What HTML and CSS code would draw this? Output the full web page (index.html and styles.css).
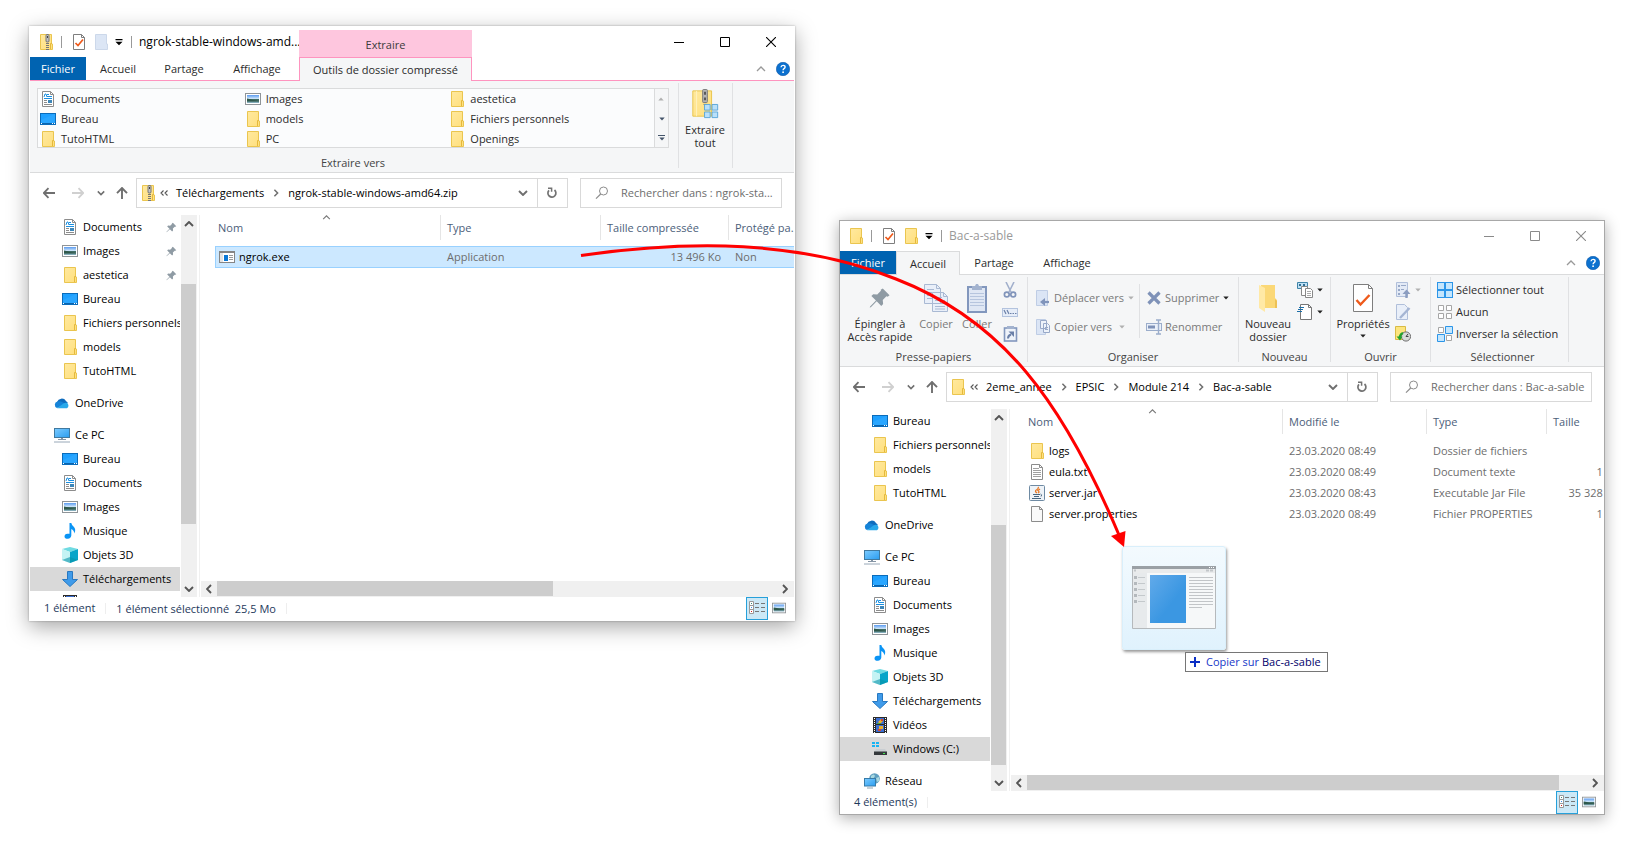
FILE: index.html
```html
<!DOCTYPE html>
<html lang="fr">
<head>
<meta charset="utf-8">
<title>Explorateur de fichiers</title>
<link rel="stylesheet" href="styles.css">
</head>
<body>
<svg class="sprite" aria-hidden="true">
  <defs>
    <linearGradient id="g-folder" x1="0" y1="0" x2="1" y2="1"><stop offset="0" stop-color="#ffe99f"/><stop offset="1" stop-color="#ffdf7c"/></linearGradient>
    <linearGradient id="g-screen" x1="0" y1="0" x2="1" y2="1"><stop offset="0" stop-color="#7ccbff"/><stop offset="1" stop-color="#2a9df0"/></linearGradient>
    <linearGradient id="g-photo" x1="0" y1="0" x2="0" y2="1"><stop offset="0" stop-color="#5b9bf0"/><stop offset=".5" stop-color="#d8ecfb"/><stop offset=".55" stop-color="#3f6b62"/><stop offset="1" stop-color="#8fb7c9"/></linearGradient>
    <linearGradient id="g-blue" x1="0" y1="0" x2="1" y2="1"><stop offset="0" stop-color="#61aaea"/><stop offset=".6" stop-color="#3b97e2"/></linearGradient>
  </defs>
  <symbol id="folder" viewBox="0 0 16 16"><path d="M2.500.5h11v9.500h1v5.500h-12z" fill="url(#g-folder)" stroke="#eac54f"/><path d="M12.500 15v-5.500h1.500" fill="none" stroke="#e5b93c"/></symbol>
  <symbol id="zip" viewBox="0 0 16 16"><path d="M2.500.5h11v9.500h1v5.500h-12z" fill="url(#g-folder)" stroke="#eac54f"/><path d="M12.500 15v-5.500h1.500" fill="none" stroke="#e5b93c"/><path d="M9.500 7v9" stroke="#777" stroke-width="3" stroke-dasharray="1 1"/><rect x="8" y=".5" width="3" height="7.500" rx="1" fill="#c4c4c4" stroke="#777"/><path d="M9.500 2v2" stroke="#444"/></symbol>
  <symbol id="folder-faded" viewBox="0 0 16 16"><path d="M2.500.5h11v9.500h1v5.500h-12z" fill="#dce6f5" stroke="#ccd8ea"/></symbol>
  <symbol id="doc" viewBox="0 0 16 16"><path d="M2.500.5h8l3 3v12h-11z" fill="#fff" stroke="#8c8c8c"/><path d="M10.500.5v3h3" fill="none" stroke="#8c8c8c"/><path d="M4 6l1-3h1l1 3M7 3.500h2M7 5.500h5M4 7.500h8" fill="none" stroke="#1b8fe0"/><path d="M4 9.500h3M4 11.500h3M4 13.500h8" stroke="#8c8c8c"/><rect x="8" y="9" width="4" height="3" fill="#3d86b8"/></symbol>
  <symbol id="image" viewBox="0 0 16 16"><rect x=".5" y="2.500" width="15" height="11" fill="#fff" stroke="#8f9498"/><rect x="2" y="4" width="12" height="8" fill="url(#g-photo)"/><path d="M2 7.500q4 .5 6 1.500l6 .5v1H2z" fill="#2f584b"/></symbol>
  <symbol id="desktop" viewBox="0 0 16 16"><rect x=".5" y="2.500" width="15" height="11" fill="#1ea0ff" stroke="#0a6cbb"/><path d="M1 12V9l13-6h1v9z" fill="#35acff" opacity=".5"/><path d="M1 12.500h14" stroke="#0a64ad"/><path d="M1 12.500h1M12 12.500h1M14 12.500h1" stroke="#fff"/></symbol>
  <symbol id="pin" viewBox="0 0 12 12"><path d="M7.500.8l3.700 3.700-1 .8-.7-.2-2 2 .2 2.200-1 1L4.200 7.800 1 11l-.6.2.2-.6 3.200-3.200L1.300 4.900l1-1 2.200.2 2-2-.1-.6z" fill="#8f9ba4"/></symbol>
  <symbol id="cloud" viewBox="0 0 16 16"><path d="M3 7a5 5 0 0 1 9-1l2 2-8 4z" fill="#0f6cbd"/><path d="M3.500 6.500A3.400 3.400 0 0 0 3 13l9-4-5-2.500a6 6 0 0 0-3.500 0z" fill="#1583d8"/><path d="M3 13.200l6.500-4.700a4 4 0 0 1 3-.7 3 3 0 0 1 .5 5.400z" fill="#28a8ea"/></symbol>
  <symbol id="pc" viewBox="0 0 16 16"><rect x=".5" y="1.500" width="15" height="9" fill="url(#g-screen)" stroke="#40799f"/><path d="M4 12.500h8" stroke="#8595a5"/><path d="M7 11h2v1H7z" fill="#8595a5"/><path d="M0 15h16" stroke="#98a8b8"/></symbol>
  <symbol id="music" viewBox="0 0 16 16"><path d="M7.500 0h1.800q.4 2 2.200 3.600 3 3 .8 7-.2-3.600-3-4.600v6.500q-.3 3-3.500 3.300-3.300 0-3.300-2.300 0-2.500 3-2.800h2z" fill="#0a94f5"/></symbol>
  <symbol id="cube" viewBox="0 0 16 16"><path d="M0 2l8-2 8 2-8 3z" fill="#6fdbe2"/><path d="M0 2l8 3v11l-8-3z" fill="#c4f3f4"/><path d="M16 2L8 5v11l8-3z" fill="#08a5c9"/><path d="M0 13l8-3 8 3-8 3z" fill="#0693a8" opacity=".6"/></symbol>
  <symbol id="download" viewBox="0 0 16 16"><path d="M5.500.5h5v8h5L8 15.500.5 8.500h5z" fill="#3f9bea" stroke="#2878c0"/></symbol>
  <symbol id="video" viewBox="0 0 16 16"><path d="M1 0h14v16H1z" fill="#2b2b2b"/><path d="M2.500 1v15M13.500 1v15" stroke="#fff" stroke-dasharray="1 1"/><path d="M4 1h8v6H4zM4 8h8v7H4z" fill="#3c6ed0"/><path d="M6 5l3-3 2 2-3 3zM7 9h4v3H7z" fill="#e8b030"/><path d="M9 2h2v2H9zM6 12h3v2H6z" fill="#d9482b"/><path d="M5 6h4v1H5z" fill="#48a848"/></symbol>
  <symbol id="drive" viewBox="0 0 16 16"><path d="M0 1h3v2H0zM4 1h3v2H4zM0 4h3v2H0zM4 4h3v2H4z" fill="#17b4f4"/><path d="M4 8h9l2 3H2z" fill="#c9ced2"/><path d="M2 10.500h13v3.500H2z" fill="#34383b"/><path d="M11 12h2v1h-2z" fill="#43e650"/></symbol>
  <symbol id="network" viewBox="0 0 16 16"><circle cx="10.500" cy="5.500" r="5.300" fill="#5f9fc0"/><path d="M7 3q3-3 4 0l-2 3-2 0zM12 5l3-1v4l-2 1z" fill="#a9d8df"/><rect x=".5" y="5.500" width="11" height="7.500" fill="url(#g-screen)" stroke="#377ba8"/><path d="M3 15h6" stroke="#8fa3b0"/></symbol>
  <symbol id="exe" viewBox="0 0 16 16"><rect x=".5" y="2.500" width="15" height="11" fill="#fff" stroke="#858585"/><path d="M0 3h16" stroke="#858585" stroke-width="2"/><path d="M1 4h3v9H1z" fill="#e3e3e3"/><path d="M5 6h4v6H5z" fill="#0a78d6"/><path d="M10 6.500h4M10 8.500h4M10 10.500h4" stroke="#999"/></symbol>
  <symbol id="txt" viewBox="0 0 16 16"><path d="M2.500.5h8l3 3v12h-11z" fill="#fff" stroke="#8c8c8c"/><path d="M10.500.5v3h3" fill="none" stroke="#8c8c8c"/><path d="M4 4.500h6M4 6.500h8M4 8.500h8M4 10.500h8M4 12.500h8" stroke="#a0a0a0"/></symbol>
  <symbol id="blank" viewBox="0 0 16 16"><path d="M2.500.5h8l3 3v12h-11z" fill="#f9f9f9" stroke="#8c8c8c"/><path d="M10.500.5v3h3" fill="none" stroke="#8c8c8c"/></symbol>
  <symbol id="jar" viewBox="0 0 16 16"><rect x=".5" y=".5" width="15" height="15" rx="1" fill="#eef3f8" stroke="#6e8aa3"/><path d="M8 8q-3-2 0-3.500Q10 3 9 2M9 8q2-1 0-2.500L11 4" fill="none" stroke="#e87722" stroke-width="1.300"/><path d="M4 9.500h7M5 11.500h5M3 13.500h9M11.500 9q2 .5.500 2.500" fill="none" stroke="#47657f"/></symbol>
  <symbol id="check-doc" viewBox="0 0 16 16"><path d="M2.500.5h8l3 3v12h-11z" fill="#fff" stroke="#7e7e7e"/><path d="M10.500.5v3h3" fill="none" stroke="#7e7e7e"/><path d="M4.500 9l2.500 2.500 5-6" fill="none" stroke="#ee5a1b" stroke-width="1.700"/></symbol>
  <symbol id="qat-more" viewBox="0 0 8 8"><path d="M.5 1h7v1.300h-7zM.5 3.800h7L4 7.300z" fill="#000"/></symbol>
  <symbol id="tri" viewBox="0 0 6 4"><path d="M.3.500h5.400L3 3.500z" fill="currentColor"/></symbol>
  <symbol id="min" viewBox="0 0 10 10"><path d="M0 5.500h10" stroke="currentColor"/></symbol>
  <symbol id="max" viewBox="0 0 10 10"><path d="M.5.5h9v9h-9z" fill="none" stroke="currentColor"/></symbol>
  <symbol id="close" viewBox="0 0 10 10"><path d="M0 0l10 10M10 0L0 10" stroke="currentColor" stroke-width="1.100"/></symbol>
  <symbol id="help" viewBox="0 0 14 14"><circle cx="7" cy="7" r="6.700" fill="#0c71cf" stroke="#0b58a8" stroke-width=".6"/><path d="M5 5.300q.2-1.900 2.100-1.900 2 0 2 1.700 0 .9-1.100 1.600-.9.600-.9 1.500" fill="none" stroke="#fff" stroke-width="1.400"/><circle cx="7.100" cy="10.200" r=".9" fill="#fff"/></symbol>
  <symbol id="up-thin" viewBox="0 0 10 6"><path d="M1 5l4-4 4 4" fill="none" stroke="currentColor" stroke-width="1.300"/></symbol>
  <symbol id="down-bold" viewBox="0 0 10 6"><path d="M1 1l4 4 4-4" fill="none" stroke="currentColor" stroke-width="1.900"/></symbol>
  <symbol id="up-bold" viewBox="0 0 10 6"><path d="M1 5l4-4 4 4" fill="none" stroke="currentColor" stroke-width="1.900"/></symbol>
  <symbol id="left-bold" viewBox="0 0 6 10"><path d="M5 1L1 5l4 4" fill="none" stroke="currentColor" stroke-width="1.900"/></symbol>
  <symbol id="right-bold" viewBox="0 0 6 10"><path d="M1 1l4 4-4 4" fill="none" stroke="currentColor" stroke-width="1.900"/></symbol>
  <symbol id="arrow-left" viewBox="0 0 12 12"><path d="M12 6H1M5.500 1.200L.8 6l4.700 4.800" fill="none" stroke="currentColor" stroke-width="1.800"/></symbol>
  <symbol id="arrow-right" viewBox="0 0 12 12"><path d="M0 6h11M6.500 1.200L11.200 6l-4.700 4.800" fill="none" stroke="currentColor" stroke-width="1.800"/></symbol>
  <symbol id="arrow-up" viewBox="0 0 12 12"><path d="M6 12V1M1 6.200L6 1l5 5.200" fill="none" stroke="currentColor" stroke-width="1.900"/></symbol>
  <symbol id="guill" viewBox="0 0 8 6"><path d="M3.500.5L1 3l2.500 2.500M7.500.5L5 3l2.500 2.500" fill="none" stroke="#555" stroke-width="1.100"/></symbol>
  <symbol id="refresh" viewBox="0 0 12 12"><path d="M3 3.300a4 4 0 1 0 5.500-.3" fill="none" stroke="#737373" stroke-width="1.700"/><path d="M2 1.200h3.600v3.600" fill="none" stroke="#737373" stroke-width="1.500"/></symbol>
  <symbol id="search" viewBox="0 0 14 14"><circle cx="8.500" cy="5" r="4" fill="none" stroke="#8c8c8c"/><path d="M5.700 8L1 12.700" stroke="#8c8c8c" stroke-width="1.200"/></symbol>
  <symbol id="extract" viewBox="0 0 28 32"><path d="M1 2h20v27H1z" fill="url(#g-folder)" stroke="#e9c348"/><path d="M5 2v27" stroke="#fff2c0"/><path d="M14 12v6" stroke="#777" stroke-width="3" stroke-dasharray="1 1"/><rect x="11.500" y=".5" width="5" height="14" rx="1" fill="#b5b5b5" stroke="#777"/><path d="M14 3v3M14 9v3" stroke="#333" stroke-width="1.500"/><path d="M13.500 16.500h6v6h-6zM21.500 16.500h6v6h-6zM13.500 24.500h6v6h-6zM21.500 24.500h6v6h-6z" fill="#b9e0fa" stroke="#5aa5d8"/></symbol>
  <symbol id="copy-big" viewBox="0 0 26 30"><path d="M1.500 1.500h12l4 4v15h-16zM9.500 9.500h11l4 4v15h-15z" fill="#e9eff9" stroke="#a9b9d3"/><path d="M13.500 1.500v4h4M20.500 9.500v4h4M4 6.500h7M4 9.500h5M4 12.500h5M4 15.500h5M12 14.500h7M12 17.500h10M12 20.500h10M12 23.500h10M12 26h10" fill="none" stroke="#a9b9d3"/></symbol>
  <symbol id="paste-big" viewBox="0 0 22 30"><rect x="2" y="4" width="18" height="25" fill="#dfe7f4" stroke="#8297bd" stroke-width="2"/><path d="M6 5V3h3l1-2h2l1 2h3v4H6z" fill="#a3b3cf"/><path d="M4 10.500h14M4 13.500h14M4 16.500h14M4 19.500h14M4 22.500h14" stroke="#b6c5de"/></symbol>
  <symbol id="cut" viewBox="0 0 16 16"><path d="M4 0l5 10M12 0L7 10" stroke="#a2b0cc" stroke-width="1.600"/><circle cx="4.800" cy="12.500" r="2.400" fill="none" stroke="#8194ba" stroke-width="1.700"/><circle cx="11.200" cy="12.500" r="2.400" fill="none" stroke="#8194ba" stroke-width="1.700"/></symbol>
  <symbol id="path" viewBox="0 0 16 16"><rect x=".5" y="4.500" width="15" height="8" fill="#e6edf8" stroke="#b3c3de"/><path d="M2 6l2 4M5 6l2 4M8 9.500h1.500M10.500 9.500H12M13 9.500h1.500" stroke="#6b80a8" stroke-width="1.200"/></symbol>
  <symbol id="paste-link" viewBox="0 0 16 16"><rect x="2.500" y="2" width="12" height="13" fill="#eef3fa" stroke="#8297bd" stroke-width="1.600"/><path d="M5 0h7v3H5z" fill="#a3b3cf"/><path d="M6 12.500q0-3 3-4" fill="none" stroke="#6b80a8" stroke-width="2"/><path d="M6.500 5.500H12V11z" fill="#6b80a8"/></symbol>
  <symbol id="move-to" viewBox="0 0 16 16"><path d="M1.500.5h11v15h-11z" fill="#dbe5f5" stroke="#bfcde5"/><path d="M14 12H9" stroke="#8094bb" stroke-width="2.200"/><path d="M10 8v8l-5-4z" fill="#8094bb"/></symbol>
  <symbol id="copy-to" viewBox="0 0 16 16"><path d="M1.500.5h9v15h-9z" fill="#dbe5f5" stroke="#bfcde5"/><path d="M5.500 1.500h6v8h-6zM8.500 4.500h4l2 2v7h-6z" fill="#eef3fa" stroke="#98a9c8"/><path d="M10 8.500h3M10 10.500h3" stroke="#98a9c8"/></symbol>
  <symbol id="delete" viewBox="0 0 16 16"><path d="M2.500 2.500l11 11M13.500 2.500l-11 11" stroke="#7f92b8" stroke-width="3.200"/></symbol>
  <symbol id="rename" viewBox="0 0 16 16"><rect x=".5" y="4.500" width="15" height="7" fill="#eaf0f9" stroke="#9badcb"/><path d="M2 8h7" stroke="#7f92b8" stroke-width="3"/><path d="M10 1h5M12.500 1v14M10 15h5" stroke="#9badcb" stroke-width="1.400"/></symbol>
  <symbol id="new-folder" viewBox="0 0 20 30"><path d="M3 2h14v13l2 2v8H3z" fill="#fbd877"/><path d="M1 2l6 3v24l-6-4z" fill="#ffe9a6"/><path d="M17 16l2 2v7h-2z" fill="#edc155"/></symbol>
  <symbol id="new-item" viewBox="0 0 16 16"><path d="M.5.5h10v6H.5z" fill="#bfe0f5" stroke="#3f84a8"/><path d="M2 2h2v2H2zM6 2h2v2H6z" fill="#2f6f93"/><path d="M4.500 4.500h6v9h-6z" fill="#fff" stroke="#888"/><path d="M8.500 6.500h5l2 2v7h-7z" fill="#fff" stroke="#888"/><path d="M10 9.500h4M10 11.500h4M10 13.500h4" stroke="#aaa"/></symbol>
  <symbol id="easy" viewBox="0 0 16 16"><path d="M3.500.5h8l3 3v12h-11z" fill="#fff" stroke="#777"/><path d="M11.500.5v3h3" fill="none" stroke="#777"/><path d="M2 3.500h5M1 5.500h5M0 7.500h5" stroke="#1c6fa8"/></symbol>
  <symbol id="props" viewBox="0 0 22 30"><path d="M1.500 1.500h15l4 4v23h-19z" fill="#fff" stroke="#7e7e7e"/><path d="M16.500 1.500v4h4" fill="none" stroke="#7e7e7e"/><path d="M4.500 17l4 4.500 9-9.500" fill="none" stroke="#ee5a1b" stroke-width="2.400"/></symbol>
  <symbol id="open" viewBox="0 0 16 16"><path d="M1.500.5h11v14h-11z" fill="#e3eaf6" stroke="#b0bfda"/><path d="M3 3h2v2H3zM3 7h2v2H3zM3 11h2v2H3z" fill="#98a9c8"/><path d="M6 3.500h5M6 7.500h3" stroke="#98a9c8"/><path d="M11.500 16v-5" stroke="#8b9dc0" stroke-width="2.400"/><path d="M7.500 12l4-4.500 4 4.500z" fill="#8b9dc0"/></symbol>
  <symbol id="edit" viewBox="0 0 16 16"><path d="M1.500.5h8l3 3v12h-11z" fill="#e9eff9" stroke="#b0bfda"/><path d="M5 14L14.500 4" stroke="#a5b5d3" stroke-width="2.400"/></symbol>
  <symbol id="history" viewBox="0 0 16 16"><path d="M.5.5h10v13H.5z" fill="#fde57e" stroke="#d8bb45"/><circle cx="11" cy="10.500" r="4.600" fill="#d8dad8" stroke="#6f6f6f"/><path d="M11 10.500l2-2.500M11 10.500h2.500" stroke="#444"/><path d="M8 7q-3 1-3.500 5" fill="none" stroke="#23a32c" stroke-width="2"/><path d="M1.500 10.500h6l-2.500 4z" fill="#23a32c"/></symbol>
  <symbol id="sel-all" viewBox="0 0 16 16"><path d="M0 0h16v16H0z" fill="#2b95e8"/><path d="M1 1h6v6H1zM9 1h6v6H9zM1 9h6v6H1zM9 9h6v6H9z" fill="#c4e6fd"/></symbol>
  <symbol id="sel-none" viewBox="0 0 16 16"><path d="M1.500 1.500h5v5h-5zM9.500 1.500h5v5h-5zM1.500 9.500h5v5h-5zM9.500 9.500h5v5h-5z" fill="#fff" stroke="#a6a6a6"/></symbol>
  <symbol id="sel-inv" viewBox="0 0 16 16"><path d="M1.500 1.500h5v5h-5zM9.500 9.500h5v5h-5z" fill="#fff" stroke="#a6a6a6"/><path d="M8.500.5h7v7h-7zM.5 8.500h7v7h-7z" fill="#c4e6fd" stroke="#2b95e8"/></symbol>
  <symbol id="details" viewBox="0 0 18 14"><path d="M1.500.5h4v4h-4zM1.500 4.500h4v4h-4zM1.500 8.500h4v4h-4z" fill="#fff" stroke="#999"/><path d="M3 2h1v1H3z" fill="#3a8a7a"/><path d="M3 6h1v1H3z" fill="#3a8fe8"/><path d="M3 10h1v1H3z" fill="#d02020"/><path d="M7 2.500h4M13 2.500h4M7 6.500h4M13 6.500h4M7 10.500h4M13 10.500h4" stroke="#777"/></symbol>
</svg>

<main class="desk">
  <section class="window window-zip" aria-label="ngrok-stable-windows-amd64.zip">
    <header class="titlebar">
      <svg class="i16"><use href="#zip"/></svg><span class="tick"></span>
      <button class="bare" aria-label="Propriétés"><svg class="i16"><use href="#check-doc"/></svg></button>
      <button class="bare" aria-label="Nouveau dossier"><svg class="i16"><use href="#folder-faded"/></svg></button>
      <button class="bare" aria-label="Personnaliser"><svg class="i8"><use href="#qat-more"/></svg></button>
      <span class="tick"></span>
      <h1 class="title">ngrok-stable-windows-amd...</h1>
      <span class="context-tab">Extraire</span>
      <div class="controls">
        <button aria-label="Réduire"><svg class="i10"><use href="#min"/></svg></button>
        <button aria-label="Agrandir"><svg class="i10"><use href="#max"/></svg></button>
        <button aria-label="Fermer"><svg class="i10"><use href="#close"/></svg></button>
      </div>
    </header>
    <nav class="tabs tabs-pink">
      <button class="tab tab-file">Fichier</button>
      <button class="tab tab-home">Accueil</button>
      <button class="tab tab-share">Partage</button>
      <button class="tab tab-view">Affichage</button>
      <button class="tab tab-tools">Outils de dossier compressé</button>
      <div class="tab-end"><button class="bare" aria-label="Réduire le ruban"><svg class="chev"><use href="#up-thin"/></svg></button><button class="bare" aria-label="Aide"><svg class="i14"><use href="#help"/></svg></button></div>
    </nav>
    <div class="ribbon">
      <div class="group group-extract">
        <div class="gallery">
          <div class="gallery-items">
            <button><svg class="i16"><use href="#doc"/></svg>Documents</button>
            <button><svg class="i16"><use href="#image"/></svg>Images</button>
            <button><svg class="i16"><use href="#folder"/></svg>aestetica</button>
            <button><svg class="i16"><use href="#desktop"/></svg>Bureau</button>
            <button><svg class="i16"><use href="#folder"/></svg>models</button>
            <button><svg class="i16"><use href="#folder"/></svg>Fichiers personnels</button>
            <button><svg class="i16"><use href="#folder"/></svg>TutoHTML</button>
            <button><svg class="i16"><use href="#folder"/></svg>PC</button>
            <button><svg class="i16"><use href="#folder"/></svg>Openings</button>
          </div>
          <div class="gallery-scroll">
            <button class="flip off" aria-label="Haut"><svg class="tri"><use href="#tri"/></svg></button>
            <button aria-label="Bas"><svg class="tri"><use href="#tri"/></svg></button>
            <button class="more" aria-label="Autres"><svg class="tri"><use href="#tri"/></svg></button>
          </div>
        </div>
        <p class="group-label">Extraire vers</p>
      </div>
      <div class="group group-all">
        <div class="group-body"><button class="big"><svg class="big-icon"><use href="#extract"/></svg><span>Extraire<br>tout</span></button></div>
      </div>
    </div>
    <div class="navbar">
      <div class="history">
        <button class="bare" aria-label="Précédent"><svg class="i12"><use href="#arrow-left"/></svg></button>
        <button class="bare pale" aria-label="Suivant"><svg class="i12"><use href="#arrow-right"/></svg></button>
        <button class="bare" aria-label="Emplacements récents"><svg class="i8"><use href="#down-bold"/></svg></button>
        <button class="bare" aria-label="Dossier parent"><svg class="i12"><use href="#arrow-up"/></svg></button>
      </div>
      <div class="address">
        <svg class="i16"><use href="#zip"/></svg><svg class="guill"><use href="#guill"/></svg>
        <a href="#">Téléchargements</a><svg class="i8"><use href="#right-bold"/></svg>
        <a href="#">ngrok-stable-windows-amd64.zip</a>
        <button class="bare drop" aria-label="Adresses précédentes"><svg class="chev"><use href="#down-bold"/></svg></button>
        <button class="bare reload" aria-label="Actualiser"><svg class="i12"><use href="#refresh"/></svg></button>
      </div>
      <label class="search"><svg class="i14"><use href="#search"/></svg><input type="text" aria-label="Rechercher" placeholder="Rechercher dans : ngrok-sta..."></label>
    </div>
    <div class="content">
      <ul class="tree">
        <li><a href="#"><svg class="i16"><use href="#doc"/></svg>Documents<svg class="pin"><use href="#pin"/></svg></a></li>
        <li><a href="#"><svg class="i16"><use href="#image"/></svg>Images<svg class="pin"><use href="#pin"/></svg></a></li>
        <li><a href="#"><svg class="i16"><use href="#folder"/></svg>aestetica<svg class="pin"><use href="#pin"/></svg></a></li>
        <li><a href="#"><svg class="i16"><use href="#desktop"/></svg>Bureau</a></li>
        <li><a href="#"><svg class="i16"><use href="#folder"/></svg>Fichiers personnels</a></li>
        <li><a href="#"><svg class="i16"><use href="#folder"/></svg>models</a></li>
        <li><a href="#"><svg class="i16"><use href="#folder"/></svg>TutoHTML</a></li>
        <li class="root"><a href="#"><svg class="i16"><use href="#cloud"/></svg>OneDrive</a></li>
        <li class="root"><a href="#"><svg class="i16"><use href="#pc"/></svg>Ce PC</a></li>
        <li><a href="#"><svg class="i16"><use href="#desktop"/></svg>Bureau</a></li>
        <li><a href="#"><svg class="i16"><use href="#doc"/></svg>Documents</a></li>
        <li><a href="#"><svg class="i16"><use href="#image"/></svg>Images</a></li>
        <li><a href="#"><svg class="i16"><use href="#music"/></svg>Musique</a></li>
        <li><a href="#"><svg class="i16"><use href="#cube"/></svg>Objets 3D</a></li>
        <li class="current"><a href="#"><svg class="i16"><use href="#download"/></svg>Téléchargements</a></li>
        <li><a href="#" aria-label="Vidéos"><svg class="i16"><use href="#video"/></svg></a></li>
      </ul>
      <div class="vscroll"><svg class="chev"><use href="#up-bold"/></svg><div class="vtrack"><span class="thumb thumb-v1"></span></div><svg class="chev"><use href="#down-bold"/></svg></div>
      <div class="files">
        <svg class="sort sort-zip"><use href="#up-thin"/></svg>
        <table>
          <colgroup><col class="c-240"><col class="c-160"><col class="c-128"><col class="c-80"></colgroup>
          <thead><tr><th>Nom</th><th>Type</th><th>Taille compressée</th><th>Protégé pa...</th></tr></thead>
          <tbody><tr class="selected"><td class="name"><svg class="i16"><use href="#exe"/></svg>ngrok.exe</td><td>Application</td><td class="num">13 496 Ko</td><td>Non</td></tr></tbody>
        </table>
        <div class="hscroll"><svg class="chev-h"><use href="#left-bold"/></svg><div class="htrack"><span class="thumb thumb-h1"></span></div><svg class="chev-h"><use href="#right-bold"/></svg></div>
      </div>
    </div>
    <footer class="status">
      <span>1 élément</span><span class="split">1 élément sélectionné&nbsp; 25,5 Mo</span><span class="split"></span>
      <div class="views"><button class="on" aria-label="Détails"><svg class="details"><use href="#details"/></svg></button><button aria-label="Grandes icônes"><svg class="i14"><use href="#image"/></svg></button></div>
    </footer>
  </section>

  <section class="window window-sandbox" aria-label="Bac-a-sable">
    <header class="titlebar">
      <svg class="i16"><use href="#folder"/></svg><span class="tick"></span>
      <button class="bare" aria-label="Propriétés"><svg class="i16"><use href="#check-doc"/></svg></button>
      <button class="bare" aria-label="Nouveau dossier"><svg class="i16"><use href="#folder"/></svg></button>
      <button class="bare" aria-label="Personnaliser"><svg class="i8"><use href="#qat-more"/></svg></button>
      <span class="tick"></span>
      <h1 class="title">Bac-a-sable</h1>
      <div class="controls">
        <button aria-label="Réduire"><svg class="i10"><use href="#min"/></svg></button>
        <button aria-label="Agrandir"><svg class="i10"><use href="#max"/></svg></button>
        <button aria-label="Fermer"><svg class="i10"><use href="#close"/></svg></button>
      </div>
    </header>
    <nav class="tabs">
      <button class="tab tab-file">Fichier</button>
      <button class="tab tab-home tab-active">Accueil</button>
      <button class="tab tab-share">Partage</button>
      <button class="tab tab-view">Affichage</button>
      <div class="tab-end"><button class="bare" aria-label="Réduire le ruban"><svg class="chev"><use href="#up-thin"/></svg></button><button class="bare" aria-label="Aide"><svg class="i14"><use href="#help"/></svg></button></div>
    </nav>
    <div class="ribbon">
      <div class="group g-clip">
        <div class="group-body">
          <button class="big b-pin"><svg class="big-icon pin-big"><use href="#pin"/></svg><span>Épingler à<br>Accès rapide</span></button>
          <button class="big b-copy off"><svg class="big-icon"><use href="#copy-big"/></svg>Copier</button>
          <button class="big b-paste off"><svg class="big-icon"><use href="#paste-big"/></svg>Coller</button>
          <div class="stack">
            <button aria-label="Couper"><svg class="i16"><use href="#cut"/></svg></button>
            <button aria-label="Copier le chemin d'accès"><svg class="i16"><use href="#path"/></svg></button>
            <button aria-label="Coller le raccourci"><svg class="i16"><use href="#paste-link"/></svg></button>
          </div>
        </div>
        <p class="group-label">Presse-papiers</p>
      </div>
      <div class="group g-org">
        <div class="group-body">
          <div class="stack stack-2 off">
            <button><svg class="i16"><use href="#move-to"/></svg>Déplacer vers<svg class="tri"><use href="#tri"/></svg></button>
            <button><svg class="i16"><use href="#copy-to"/></svg>Copier vers<svg class="tri far"><use href="#tri"/></svg></button>
          </div>
          <div class="stack stack-2 stack-line off">
            <button><svg class="i16"><use href="#delete"/></svg>Supprimer<svg class="tri dark"><use href="#tri"/></svg></button>
            <button><svg class="i16"><use href="#rename"/></svg>Renommer</button>
          </div>
        </div>
        <p class="group-label">Organiser</p>
      </div>
      <div class="group g-new">
        <div class="group-body">
          <button class="big b-new"><svg class="big-icon"><use href="#new-folder"/></svg><span>Nouveau<br>dossier</span></button>
          <div class="stack">
            <button aria-label="Nouvel élément"><svg class="i16"><use href="#new-item"/></svg><svg class="tri dark"><use href="#tri"/></svg></button>
            <button aria-label="Accès facile"><svg class="i16"><use href="#easy"/></svg><svg class="tri dark"><use href="#tri"/></svg></button>
          </div>
        </div>
        <p class="group-label">Nouveau</p>
      </div>
      <div class="group g-open">
        <div class="group-body">
          <button class="big b-props"><svg class="big-icon"><use href="#props"/></svg>Propriétés<svg class="tri dark"><use href="#tri"/></svg></button>
          <div class="stack off">
            <button aria-label="Ouvrir"><svg class="i16"><use href="#open"/></svg><svg class="tri"><use href="#tri"/></svg></button>
            <button aria-label="Modifier"><svg class="i16"><use href="#edit"/></svg></button>
            <button aria-label="Historique"><svg class="i16"><use href="#history"/></svg></button>
          </div>
        </div>
        <p class="group-label">Ouvrir</p>
      </div>
      <div class="group g-select">
        <div class="group-body">
          <div class="stack">
            <button><svg class="i16"><use href="#sel-all"/></svg>Sélectionner tout</button>
            <button><svg class="i16"><use href="#sel-none"/></svg>Aucun</button>
            <button><svg class="i16"><use href="#sel-inv"/></svg>Inverser la sélection</button>
          </div>
        </div>
        <p class="group-label">Sélectionner</p>
      </div>
    </div>
    <div class="navbar">
      <div class="history">
        <button class="bare" aria-label="Précédent"><svg class="i12"><use href="#arrow-left"/></svg></button>
        <button class="bare pale" aria-label="Suivant"><svg class="i12"><use href="#arrow-right"/></svg></button>
        <button class="bare" aria-label="Emplacements récents"><svg class="i8"><use href="#down-bold"/></svg></button>
        <button class="bare" aria-label="Dossier parent"><svg class="i12"><use href="#arrow-up"/></svg></button>
      </div>
      <div class="address">
        <svg class="i16"><use href="#folder"/></svg><svg class="guill"><use href="#guill"/></svg>
        <a href="#">2eme_annee</a><svg class="i8"><use href="#right-bold"/></svg>
        <a href="#">EPSIC</a><svg class="i8"><use href="#right-bold"/></svg>
        <a href="#">Module 214</a><svg class="i8"><use href="#right-bold"/></svg>
        <a href="#">Bac-a-sable</a>
        <button class="bare drop" aria-label="Adresses précédentes"><svg class="chev"><use href="#down-bold"/></svg></button>
        <button class="bare reload" aria-label="Actualiser"><svg class="i12"><use href="#refresh"/></svg></button>
      </div>
      <label class="search"><svg class="i14"><use href="#search"/></svg><input type="text" aria-label="Rechercher" placeholder="Rechercher dans : Bac-a-sable"></label>
    </div>
    <div class="content">
      <ul class="tree">
        <li><a href="#"><svg class="i16"><use href="#desktop"/></svg>Bureau</a></li>
        <li><a href="#"><svg class="i16"><use href="#folder"/></svg>Fichiers personnels</a></li>
        <li><a href="#"><svg class="i16"><use href="#folder"/></svg>models</a></li>
        <li><a href="#"><svg class="i16"><use href="#folder"/></svg>TutoHTML</a></li>
        <li class="root"><a href="#"><svg class="i16"><use href="#cloud"/></svg>OneDrive</a></li>
        <li class="root"><a href="#"><svg class="i16"><use href="#pc"/></svg>Ce PC</a></li>
        <li><a href="#"><svg class="i16"><use href="#desktop"/></svg>Bureau</a></li>
        <li><a href="#"><svg class="i16"><use href="#doc"/></svg>Documents</a></li>
        <li><a href="#"><svg class="i16"><use href="#image"/></svg>Images</a></li>
        <li><a href="#"><svg class="i16"><use href="#music"/></svg>Musique</a></li>
        <li><a href="#"><svg class="i16"><use href="#cube"/></svg>Objets 3D</a></li>
        <li><a href="#"><svg class="i16"><use href="#download"/></svg>Téléchargements</a></li>
        <li><a href="#"><svg class="i16"><use href="#video"/></svg>Vidéos</a></li>
        <li class="current"><a href="#"><svg class="i16"><use href="#drive"/></svg>Windows (C:)</a></li>
        <li class="root"><a href="#"><svg class="i16"><use href="#network"/></svg>Réseau</a></li>
      </ul>
      <div class="vscroll"><svg class="chev"><use href="#up-bold"/></svg><div class="vtrack"><span class="thumb thumb-v2"></span></div><svg class="chev"><use href="#down-bold"/></svg></div>
      <div class="files">
        <svg class="sort sort-sandbox"><use href="#up-thin"/></svg>
        <table>
          <colgroup><col class="c-272"><col class="c-144"><col class="c-120"><col class="c-80"></colgroup>
          <thead><tr><th>Nom</th><th>Modifié le</th><th>Type</th><th>Taille</th></tr></thead>
          <tbody>
            <tr><td class="name"><svg class="i16"><use href="#folder"/></svg>logs</td><td>23.03.2020 08:49</td><td>Dossier de fichiers</td><td></td></tr>
            <tr><td class="name"><svg class="i16"><use href="#txt"/></svg>eula.txt</td><td>23.03.2020 08:49</td><td>Document texte</td><td class="num">1 Ko</td></tr>
            <tr><td class="name"><svg class="i16"><use href="#jar"/></svg>server.jar</td><td>23.03.2020 08:43</td><td>Executable Jar File</td><td class="num">35 328 Ko</td></tr>
            <tr><td class="name"><svg class="i16"><use href="#blank"/></svg>server.properties</td><td>23.03.2020 08:49</td><td>Fichier PROPERTIES</td><td class="num">1 Ko</td></tr>
          </tbody>
        </table>
        <div class="hscroll"><svg class="chev-h"><use href="#left-bold"/></svg><div class="htrack"><span class="thumb thumb-h2"></span></div><svg class="chev-h"><use href="#right-bold"/></svg></div>
      </div>
    </div>
    <footer class="status">
      <span>4 élément(s)</span><span class="split"></span>
      <div class="views"><button class="on" aria-label="Détails"><svg class="details"><use href="#details"/></svg></button><button aria-label="Grandes icônes"><svg class="i14"><use href="#image"/></svg></button></div>
    </footer>
  </section>

  <div class="ghost">
    <svg width="84" height="63" viewBox="0 0 84 63">
      <path d="M.5.5h83v62H.5z" fill="#f6f8f9" stroke="#b5b9bc"/><path d="M0 0h84v3H0z" fill="#9aa0a5"/><path d="M1 3h82v4H1z" fill="#e9ebec"/><path d="M1 7h14v55H1z" fill="#e7eaec"/>
      <path d="M77 1.500h1M79 1.500h1M81 1.500h1" stroke="#fff"/><path d="M2 4.500h2M74 4.500h3M78 4.500h3" stroke="#c2c6c9" stroke-width="2"/>
      <path d="M2 11.500h3M2 17.500h3M2 23.500h3M2 29.500h3M2 35.500h3" stroke="#b4b9bd" stroke-width="3"/><path d="M6 11.500h7M6 17.500h7M6 23.500h7M6 29.500h7M6 35.500h7" stroke="#c4c9cc"/>
      <path d="M18 9h36v48H18z" fill="url(#g-blue)"/>
      <path d="M57 11.500h24M57 14.500h24M57 17.500h24M57 20.500h24M57 23.500h24M57 26.500h24M57 29.500h24M57 32.500h24M57 35.500h24M57 38.500h24M57 41.500h13" stroke="#c2c5c8"/>
    </svg>
  </div>
  <p class="tip"><svg width="10" height="10" viewBox="0 0 10 10"><path d="M5 0v10M0 5h10" stroke="#0a2fc4" stroke-width="2"/></svg><span>Copier sur <b>Bac-a-sable</b></span></p>
  <svg class="arrow" width="1642" height="851" viewBox="0 0 1642 851" aria-hidden="true">
    <path d="M581 255.500C690 240 800 240 896 279C1002 320 1062 400 1119 535" fill="none" stroke="#f00" stroke-width="3"/>
    <path d="M1111 536l14.500-5L1124 547z" fill="#f00"/>
  </svg>
</main>
</body>
</html>
```

FILE: styles.css
```css
* { box-sizing: border-box; }
html, body { height: 100%; }
body { margin: 0; background: #fff; color: #000; font: 11px/16px "Open Sans", "Noto Sans", sans-serif; }
h1, p, ul { margin: 0; padding: 0; font: inherit; list-style: none; }
a { color: inherit; text-decoration: none; }
button, input { font: inherit; color: inherit; background: none; border: 0; padding: 0; }
button { display: flex; align-items: center; white-space: nowrap; }
svg { flex: none; display: block; }
.sprite { position: absolute; width: 0; height: 0; }
.i8 { width: 8px; height: 8px; }
.i10 { width: 10px; height: 10px; }
.i12 { width: 12px; height: 12px; }
.i14 { width: 14px; height: 14px; }
.i16 { width: 16px; height: 16px; }
.chev { width: 10px; height: 6px; }
.chev-h { width: 6px; height: 10px; }
.tri { width: 6px; height: 4px; }
.guill { width: 8px; height: 6px; }

.desk { position: relative; height: 100%; overflow: hidden; }
.window { position: absolute; display: flex; flex-direction: column; width: 46.65%; height: 69.9%; background: #fff; }
.window-zip { left: 29px; top: 26px; border: 1px solid #fff; box-shadow: 0 0 2px rgba(0,0,0,.3), 0 6px 20px rgba(0,0,0,.35); }
.window-sandbox { left: 839px; top: 220px; border: 1px solid #a8a8a8; box-shadow: 0 3px 14px rgba(0,0,0,.32); }

.titlebar { display: flex; align-items: center; height: 30px; padding-left: 8px; flex: none; }
.titlebar .tick { width: 1px; height: 12px; margin: 0 9px 0 7px; background: #999; }
.titlebar .bare { margin-right: 6px; }
.titlebar .bare + .tick { margin: 0 7px 0 2px; }
.title { width: 160px; font-size: 12px; white-space: nowrap; }
.window-sandbox .title { color: #999; }
.context-tab { align-self: flex-end; width: 173px; height: 27px; line-height: 29px; text-align: center; background: #fec6de; color: #3b3b3b; }
.controls { display: flex; margin-left: auto; align-self: stretch; }
.controls button { width: 46px; justify-content: center; }
.window-sandbox .controls { color: #8a8a8a; }

.tabs { display: flex; height: 24px; flex: none; border-bottom: 1px solid #dadbdc; color: #2b2b2b; }
.tabs-pink { border-color: #fe94bf; }
.tab { justify-content: center; height: 23px; }
.tab-file { width: 56px; background: #0063b1; color: #fff; }
.tab-home { width: 64px; }
.tab-share { width: 68px; }
.tab-view { width: 78px; }
.tab-active { height: 24px; background: #f5f6f7; border: 1px solid #dadbdc; border-bottom: 0; }
.tab-tools { width: 173px; height: 24px; margin-left: 3px; background: #f5f6f7; border: 1px solid #fe94bf; border-bottom: 0; }
.tab-end { display: flex; align-items: center; gap: 10px; margin-left: auto; padding-right: 4px; }
.tab-end .chev { color: #999; }

.ribbon { display: flex; height: 92px; flex: none; padding: 2px 0 4px; background: #f5f6f7; border-bottom: 1px solid #dadbdc; color: #2b2b2b; }
.group { display: flex; flex-direction: column; border-right: 1px solid #e0e1e3; }
.group-body { display: flex; flex: 1; }
.group-label { line-height: 10px; text-align: center; color: #444; }
.group-extract { width: 649px; justify-content: space-between; padding: 5px 9px 0 7px; }
.group-all { width: 54px; }
.gallery { display: flex; height: 60px; border: 1px solid #dadbdc; background: #fbfcfd; }
.gallery-items { flex: 1; display: grid; grid-template-columns: repeat(3, 1fr); grid-auto-rows: 20px; padding-left: 2px; height: 58px; }
.gallery-items button { gap: 5px; }
.gallery-scroll { width: 14px; border-left: 1px solid #dadbdc; background: #f5f6f7; color: #44546a; }
.gallery-scroll button { width: 100%; height: 20px; justify-content: center; }
.gallery-scroll .more { flex-direction: column; gap: 1px; height: 18px; }
.gallery-scroll .more::before { content: ""; width: 7px; height: 1px; background: #44546a; }
.flip { transform: rotate(180deg); }
.flip.off { color: #a9b1bd; }

.big { flex-direction: column; width: 52px; line-height: 13px; padding-top: 4px; align-self: flex-start; }
.big-icon { width: 28px; height: 30px; margin: 2px 0 4px; }
.pin-big { width: 22px; height: 22px; margin: 6px 0 8px; }
.big .tri { margin-top: 4px; }
.off { color: #7a7a7a; }
.off .tri { color: #b0b0b0; }
.off .dark, .tri.dark { color: #222; }
.stack { display: flex; flex-direction: column; gap: 6px; padding-top: 5px; }
.stack button { height: 16px; gap: 3px; }
.stack-2 { gap: 13px; padding-top: 13px; }
.stack .tri { margin-left: 1px; }
.stack .far { margin-left: 4px; }
.stack-line { height: 54px; margin: 7px 0 0 5px; padding: 6px 0 0 6px; border-left: 1px solid #e0e1e3; }
.g-clip { width: 188px; }
.b-pin { width: 80px; }
.b-copy { width: 32px; }
.b-paste { width: 50px; }
.g-org { width: 211px; }
.g-org .stack:first-child { width: 106px; padding-left: 7px; }
.g-new { width: 92px; }
.b-new { width: 58px; }
.g-open { width: 100px; }
.b-props { width: 64px; }
.g-select { width: 138px; padding-left: 6px; }

.navbar { display: flex; height: 42px; flex: none; padding: 5px 12px 7px 13px; }
.history { display: flex; align-items: center; width: 93px; color: #6f6f6f; }
.history .bare { margin-right: 17px; }
.history .bare:nth-child(2) { margin-right: 13px; }
.history .bare:nth-child(3) { margin-right: 11px; }
.history .bare:last-child { margin: 0; }
.history .pale { color: #d0d0d0; }
.address { flex: 1; display: flex; align-items: center; border: 1px solid #d9d9d9; padding-left: 3px; white-space: nowrap; }
.address .guill { margin: 0 8px 0 4px; }
.address a + .i8 { margin: 0 8px; color: #6f6f6f; }
.drop { margin-left: auto; padding: 0 9px; color: #6f6f6f; }
.reload { align-self: stretch; width: 30px; justify-content: center; border-left: 1px solid #d9d9d9; }
.search { display: flex; align-items: center; gap: 12px; width: 202px; margin-left: 12px; padding-left: 14px; border: 1px solid #d9d9d9; }
.search input { flex: 1; min-width: 0; outline: 0; }
.search input::placeholder { color: #6d6d6d; opacity: 1; }

.content { flex: 1; display: flex; min-height: 0; }
.tree { width: 150px; margin-right: 1px; flex: none; overflow: hidden; }
.tree a { display: flex; align-items: center; gap: 5px; height: 24px; padding-left: 32px; white-space: nowrap; }
.tree .root { margin: 8px 0 0; }
.tree .root a { padding-left: 24px; }
.tree .current { background: #d9d9d9; }
.pin { width: 11px; height: 11px; margin: 0 3px 0 auto; }
.vscroll { display: flex; flex-direction: column; align-items: center; width: 16px; flex: none; padding: 6px 0 5px; background: #f0f0f0; color: #555; }
.vtrack { flex: 1; align-self: stretch; }
.thumb { display: block; background: #cdcdcd; }
.thumb-v1 { height: 67%; margin: 57px 1px 0 0; }
.thumb-v2 { height: 67%; margin: 104px 1px 0 0; }
.files { flex: 1; min-width: 0; display: flex; flex-direction: column; justify-content: space-between; margin-left: 2px; padding-left: 1px; border-left: 1px solid #f0f0f0; overflow: hidden; position: relative; }
.sort { position: absolute; top: 0; width: 9px; height: 5px; color: #777; }
.sort-zip { left: 122px; }
.sort-sandbox { left: 138px; }
table { table-layout: fixed; width: 0; border-collapse: separate; border-spacing: 0; color: #6d6d6d; }
.c-240 { width: 240px; }
.c-160 { width: 160px; }
.c-128 { width: 128px; }
.c-80 { width: 80px; }
.c-272 { width: 272px; }
.c-144 { width: 144px; }
.c-120 { width: 120px; }
th { height: 25px; padding: 0 0 0 6px; border-right: 1px solid #e5e5e5; font-weight: 400; text-align: left; color: #4c607a; white-space: nowrap; overflow: hidden; }
th:first-child { padding-left: 17px; }
thead::after { content: ""; display: block; height: 6px; }
td { height: 21px; padding: 0 0 0 6px; white-space: nowrap; }
.name { display: flex; align-items: center; gap: 4px; padding-left: 18px; color: #000; }
.num { text-align: right; padding-right: 8px; }
.selected td { height: 22px; background: #cce8ff; border: solid #99d1ff; border-width: 1px 0; }
.selected .name { margin-left: 14px; padding-left: 3px; border-left-width: 1px; }
.hscroll { display: flex; align-items: center; height: 16px; padding: 0 6px 0 5px; background: #f0f0f0; color: #555; }
.htrack { flex: 1; align-self: stretch; margin: 0 5px; }
.htrack .thumb { height: 15px; }
.thumb-h1 { width: 60%; }
.thumb-h2 { width: 95%; }

.status { display: flex; align-items: center; height: 23px; flex: none; padding-left: 14px; color: #1e395b; }
.split { margin-left: 10px; padding-left: 10px; height: 11px; line-height: 11px; border-left: 1px solid #eee; }
.views { display: flex; align-self: stretch; margin-left: auto; padding-right: 8px; gap: 4px; }
.views .on { width: 22px; justify-content: center; background: #cce8f6; border: 1px solid #26a0da; }
.details { width: 18px; height: 14px; }

.ghost { position: absolute; left: 1122px; top: 546px; width: 104px; height: 104px; padding: 19px 9px; border: 1px solid #d9effb; border-radius: 3px; background: linear-gradient(#f3fafe, #e0f2fd); box-shadow: 1px 2px 3px rgba(0,0,0,.4); }
.tip { position: absolute; left: 1185px; top: 652px; display: flex; align-items: center; gap: 6px; height: 20px; padding: 0 6px 0 4px; border: 1px solid #767676; background: #fff; color: #1538c8; white-space: nowrap; }
.tip b { font-weight: 400; color: #00006b; }
.arrow { position: absolute; left: 0; top: 0; pointer-events: none; }
```
